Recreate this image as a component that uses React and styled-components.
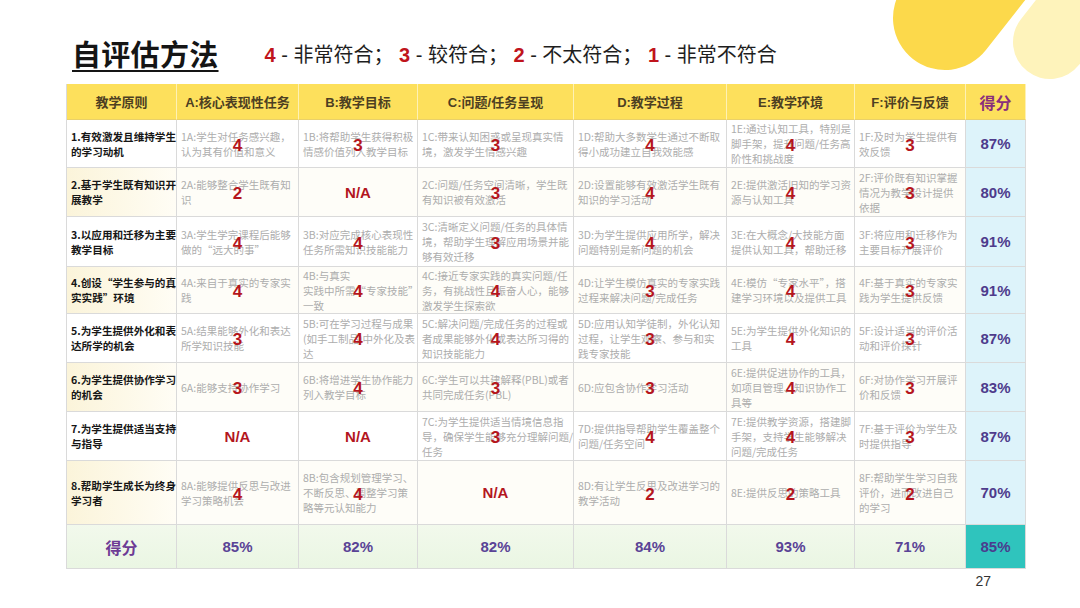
import React from "react";
import styled, { createGlobalStyle, css } from "styled-components";

//-----------------Global-------------------
const GlobalStyle = createGlobalStyle`
  html, body {
    margin: 0;
    padding: 0;
    background: #ffffff;
  }
  body {
    font-family: "Liberation Sans", "Noto Sans CJK SC", sans-serif;
    overflow: hidden;
  }
`;

//-----------------Styled components-------------------
const Slide = styled.div`
  position: relative;
  width: 1080px;
  height: 608px;
  overflow: hidden;
  background: #fff;
`;

const Decoration = styled.svg`
  position: absolute;
  top: 0;
  right: 0;
  width: 200px;
  height: 100px;
`;

const TitleBar = styled.div`
  display: flex;
  align-items: center;
  gap: 46px;
  height: 62px;
  padding: 22px 0 0 72px;
`;

const Title = styled.h1`
  margin: 0;
  font-size: 29px;
  font-weight: 700;
  color: #151515;
  text-decoration: underline;
  text-decoration-thickness: 2px;
  text-underline-offset: 4px;
  letter-spacing: 0.3px;
`;

const Legend = styled.div`
  font-size: 20px;
  color: #1e1e1e;
  white-space: pre;
`;

const LegendNum = styled.span`
  color: #c0141c;
  font-weight: 700;
`;

const Table = styled.div`
  display: grid;
  grid-template-columns: 110px 122px 119px 156px 153px 128px 111px 60px;
  grid-template-rows: 36px 48px 49px 50px 47px 49px 49px 49px 64px 44px;
  width: 959px;
  margin-left: 66px;
  border-left: 1px solid #dadada;
  box-sizing: border-box;
`;

const cellBase = css`
  box-sizing: border-box;
  border-right: 1px solid #dadada;
  border-bottom: 1px solid #dadada;
  display: flex;
  align-items: center;
  min-width: 0;
`;

const HeadCell = styled.div`
  ${cellBase};
  justify-content: center;
  background: #fde05c;
  border-right-color: rgba(255, 255, 255, 0.55);
  border-bottom-color: #e9d06a;
  font-size: ${(p) => (p.$score ? "16px" : "13px")};
  font-weight: 700;
  color: ${(p) => (p.$score ? "#8a2f7c" : "#4d3f22")};
`;

const LabelCell = styled.div`
  ${cellBase};
  padding-left: 4px;
  background: ${(p) =>
    p.$shade ? "linear-gradient(90deg, #fbf4da, #fffdf5)" : "#ffffff"};
  font-family: "Noto Sans CJK SC", "Liberation Sans", sans-serif;
  font-size: 10.6px;
  font-weight: 700;
  line-height: 15px;
  color: #161616;
  white-space: nowrap;
`;

const DescCell = styled.div`
  ${cellBase};
  position: relative;
  padding-left: 4px;
  background: ${(p) => (p.$shade ? "#fefdf8" : "#ffffff")};
  font-family: "Noto Sans CJK SC", "Liberation Sans", sans-serif;
  font-size: 10.5px;
  line-height: 15px;
  color: #adadad;
  white-space: nowrap;
`;

const Line = styled.div``;

const Mark = styled.span`
  position: absolute;
  left: 50%;
  top: 50%;
  transform: translate(-50%, -42%);
  font-family: "Liberation Sans", sans-serif;
  font-size: 17px;
  font-weight: 700;
  color: #b5161d;
  line-height: 1;
`;

const NaCell = styled.div`
  ${cellBase};
  justify-content: center;
  background: ${(p) => (p.$shade ? "#fefdf8" : "#ffffff")};
  font-size: 15px;
  font-weight: 700;
  color: #b3161e;
`;

const ScoreCell = styled.div`
  ${cellBase};
  justify-content: center;
  background: #ddf3fa;
  font-size: 15px;
  font-weight: 700;
  color: #4e3b8c;
`;

const TotalCell = styled.div`
  ${cellBase};
  justify-content: center;
  background: ${(p) =>
    p.$final ? "#2fc4bd" : "linear-gradient(180deg, #f2f9ec, #eaf6e3)"};
  font-size: ${(p) => (p.$label ? "16px" : "15px")};
  font-weight: 700;
  color: ${(p) => (p.$label ? "#6d3b95" : p.$final ? "#4a3c8e" : "#5a4396")};
`;

const Footer = styled.div`
  display: flex;
  justify-content: flex-end;
  padding: 4px 89px 0 0;
`;

const PageNo = styled.span`
  font-size: 14px;
  color: #333;
`;

//-----------------Data-------------------
const heads = [
  "教学原则",
  "A:核心表现性任务",
  "B:教学目标",
  "C:问题/任务呈现",
  "D:教学过程",
  "E:教学环境",
  "F:评价与反馈",
];

const rows = [
  {
    label: ["1.有效激发且维持学生", "的学习动机"],
    cells: [
      { t: ["1A:学生对任务感兴趣，", "认为其有价值和意义"], s: 4 },
      { t: ["1B:将帮助学生获得积极", "情感价值列入教学目标"], s: 3 },
      { t: ["1C:带来认知困惑或呈现真实情", "境，激发学生情感兴趣"], s: 3 },
      { t: ["1D:帮助大多数学生通过不断取", "得小成功建立自我效能感"], s: 4 },
      { t: ["1E:通过认知工具，特别是", "脚手架，提升问题/任务高", "阶性和挑战度"], s: 4 },
      { t: ["1F:及时为学生提供有", "效反馈"], s: 3 },
    ],
    score: "87%",
  },
  {
    label: ["2.基于学生既有知识开", "展教学"],
    cells: [
      { t: ["2A:能够整合学生既有知", "识"], s: 2 },
      null,
      { t: ["2C:问题/任务空间清晰，学生既", "有知识被有效激活"], s: 3 },
      { t: ["2D:设置能够有效激活学生既有", "知识的学习活动"], s: 4 },
      { t: ["2E:提供激活旧知的学习资", "源与认知工具"], s: 4 },
      { t: ["2F:评价既有知识掌握", "情况为教学设计提供", "依据"], s: 3 },
    ],
    score: "80%",
  },
  {
    label: ["3.以应用和迁移为主要", "教学目标"],
    cells: [
      { t: ["3A:学生学完课程后能够", "做的“远大的事”"], s: 4 },
      { t: ["3B:对应完成核心表现性", "任务所需知识技能能力"], s: 4 },
      { t: ["3C:清晰定义问题/任务的具体情", "境，帮助学生理解应用场景并能", "够有效迁移"], s: 3 },
      { t: ["3D:为学生提供应用所学，解决", "问题特别是新问题的机会"], s: 4 },
      { t: ["3E:在大概念/大技能方面", "提供认知工具，帮助迁移"], s: 4 },
      { t: ["3F:将应用和迁移作为", "主要目标开展评价"], s: 3 },
    ],
    score: "91%",
  },
  {
    label: ["4.创设“学生参与的真", "实实践”环境"],
    cells: [
      { t: ["4A:来自于真实的专家实", "践"], s: 4 },
      { t: ["4B:与真实", "实践中所需“专家技能”", "一致"], s: 4 },
      { t: ["4C:接近专家实践的真实问题/任", "务，有挑战性且振奋人心，能够", "激发学生探索欲"], s: 4 },
      { t: ["4D:让学生模仿真实的专家实践", "过程来解决问题/完成任务"], s: 3 },
      { t: ["4E:模仿“专家水平”，搭", "建学习环境以及提供工具"], s: 4 },
      { t: ["4F:基于真实的专家实", "践为学生提供反馈"], s: 3 },
    ],
    score: "91%",
  },
  {
    label: ["5.为学生提供外化和表", "达所学的机会"],
    cells: [
      { t: ["5A:结果能够外化和表达", "所学知识技能"], s: 3 },
      { t: ["5B:可在学习过程与成果", "(如手工制品)中外化及表", "达"], s: 4 },
      { t: ["5C:解决问题/完成任务的过程或", "者成果能够外化或表达所习得的", "知识技能能力"], s: 4 },
      { t: ["5D:应用认知学徒制，外化认知", "过程，让学生观察、参与和实", "践专家技能"], s: 3 },
      { t: ["5E:为学生提供外化知识的", "工具"], s: 4 },
      { t: ["5F:设计适当的评价活", "动和评价探针"], s: 3 },
    ],
    score: "87%",
  },
  {
    label: ["6.为学生提供协作学习", "的机会"],
    cells: [
      { t: ["6A:能够支持协作学习"], s: 3 },
      { t: ["6B:将增进学生协作能力", "列入教学目标"], s: 4 },
      { t: ["6C:学生可以共建解释(PBL)或者", "共同完成任务(PBL)"], s: 3 },
      { t: ["6D:应包含协作学习活动"], s: 3 },
      { t: ["6E:提供促进协作的工具，", "如项目管理、知识协作工", "具等"], s: 4 },
      { t: ["6F:对协作学习开展评", "价和反馈"], s: 3 },
    ],
    score: "83%",
  },
  {
    label: ["7.为学生提供适当支持", "与指导"],
    cells: [
      null,
      null,
      { t: ["7C:为学生提供适当情境信息指", "导，确保学生能够充分理解问题/", "任务"], s: 3 },
      { t: ["7D:提供指导帮助学生覆盖整个", "问题/任务空间"], s: 4 },
      { t: ["7E:提供教学资源，搭建脚", "手架，支持学生能够解决", "问题/完成任务"], s: 4 },
      { t: ["7F:基于评价为学生及", "时提供指导"], s: 3 },
    ],
    score: "87%",
  },
  {
    label: ["8.帮助学生成长为终身", "学习者"],
    cells: [
      { t: ["8A:能够提供反思与改进", "学习策略机会"], s: 4 },
      { t: ["8B:包含规划管理学习、", "不断反思、调整学习策", "略等元认知能力"], s: 4 },
      null,
      { t: ["8D:有让学生反思及改进学习的", "教学活动"], s: 2 },
      { t: ["8E:提供反思的策略工具"], s: 2 },
      { t: ["8F:帮助学生学习自我", "评价，进而改进自己", "的学习"], s: 2 },
    ],
    score: "70%",
  },
];

const totals = ["85%", "82%", "82%", "84%", "93%", "71%"];

const legend = [
  ["4", " - 非常符合； "],
  ["3", " - 较符合； "],
  ["2", " - 不太符合； "],
  ["1", " - 非常不符合"],
];

//-----------------Component-------------------
export default function App() {
  return (
    <Slide>
      <GlobalStyle />
      <Decoration viewBox="0 0 200 100">
        <line x1="65" y1="18" x2="189" y2="-140" stroke="#fcd94b" strokeWidth="104" strokeLinecap="round" />
        <line x1="170" y1="42" x2="294" y2="-116" stroke="#fef3bb" strokeWidth="74" strokeLinecap="round" />
      </Decoration>

      <TitleBar>
        <Title>自评估方法</Title>
        <Legend>
          {legend.map(([n, txt]) => (
            <React.Fragment key={n}>
              <LegendNum>{n}</LegendNum>
              {txt}
            </React.Fragment>
          ))}
        </Legend>
      </TitleBar>

      <Table>
        {heads.map((h) => (
          <HeadCell key={h}>{h}</HeadCell>
        ))}
        <HeadCell $score>得分</HeadCell>

        {rows.map((row, i) => {
          const shade = i % 2 === 1;
          return (
            <React.Fragment key={i}>
              <LabelCell $shade={shade}>
                <div>
                  {row.label.map((l) => (
                    <Line key={l}>{l}</Line>
                  ))}
                </div>
              </LabelCell>
              {row.cells.map((c, j) =>
                c ? (
                  <DescCell key={j} $shade={shade}>
                    <div>
                      {c.t.map((l) => (
                        <Line key={l}>{l}</Line>
                      ))}
                    </div>
                    <Mark>{c.s}</Mark>
                  </DescCell>
                ) : (
                  <NaCell key={j} $shade={shade}>N/A</NaCell>
                )
              )}
              <ScoreCell>{row.score}</ScoreCell>
            </React.Fragment>
          );
        })}

        <TotalCell $label>得分</TotalCell>
        {totals.map((t, k) => (
          <TotalCell key={k}>{t}</TotalCell>
        ))}
        <TotalCell $final>85%</TotalCell>
      </Table>

      <Footer>
        <PageNo>27</PageNo>
      </Footer>
    </Slide>
  );
}
